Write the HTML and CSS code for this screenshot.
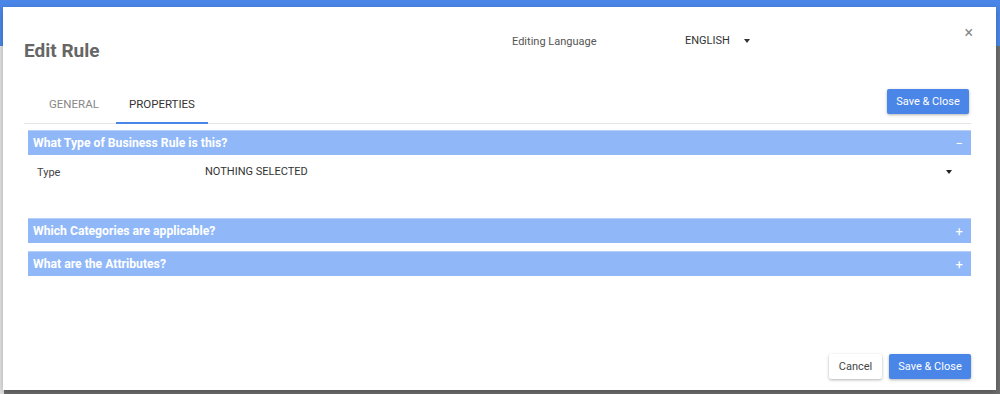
FILE: index.html
```html
<!DOCTYPE html>
<html>
<head>
    <title>Edit Rule</title>
    <link rel="stylesheet" href="styles.css">
</head>
<body>
    <div class="backdrop">
        <div class="app-bar"></div>
    </div>

    <div class="dialog">
        <div class="dialog-head">
            <h1>Edit Rule</h1>
            <div class="language">
                <span class="lang-label">Editing Language</span>
                <span class="lang-value">ENGLISH</span>
                <span class="caret"></span>
            </div>
            <span class="close">&times;</span>
        </div>

        <div class="tab-row">
            <div class="tabs">
                <div class="tab">GENERAL</div>
                <div class="tab active">PROPERTIES</div>
            </div>
            <button class="btn primary">Save &amp; Close</button>
        </div>

        <div class="section">
            <div class="section-head">
                <span>What Type of Business Rule is this?</span>
                <span class="toggle">&minus;</span>
            </div>
            <div class="field">
                <span class="field-label">Type</span>
                <span class="field-value">NOTHING SELECTED</span>
                <span class="caret dark"></span>
            </div>
        </div>

        <div class="section">
            <div class="section-head">
                <span>Which Categories are applicable?</span>
                <span class="toggle">+</span>
            </div>
        </div>

        <div class="section">
            <div class="section-head">
                <span>What are the Attributes?</span>
                <span class="toggle">+</span>
            </div>
        </div>

        <div class="dialog-foot">
            <button class="btn">Cancel</button>
            <button class="btn primary">Save &amp; Close</button>
        </div>
    </div>
</body>
</html>
```

FILE: styles.css
```css
body {
    margin: 0;
    font-family: Roboto, Arial, sans-serif;
    background: #6e6e6e;
    height: 394px;
    overflow: hidden;
}
.backdrop {
    position: absolute;
    inset: 0;
    background: linear-gradient(to right, #e2e2e2 0, #e2e2e2 4px, #6e6e6e 4px);
}
.app-bar {
    height: 46px;
    background: #4a86e8;
}
.dialog {
    position: absolute;
    left: 3px;
    top: 7px;
    width: 993px;
    height: 383px;
    background: #fff;
    box-shadow: 0 2px 6px rgba(0,0,0,0.25);
    box-sizing: border-box;
    padding: 0 25px 0 21px;
    display: flex;
    flex-direction: column;
}
.dialog-head {
    display: flex;
    align-items: flex-start;
    height: 75px;
    position: relative;
}
.dialog-head h1 {
    margin: 32px 0 0 0;
    font-size: 19px;
    font-weight: bold;
    color: #666;
    width: 488px;
}
.language {
    display: flex;
    align-items: center;
    margin-top: 26px;
    font-size: 11px;
}
.lang-label {
    color: #555;
    width: 173px;
    margin-top: 2px;
}
.lang-value {
    color: #333;
}
.caret {
    width: 0;
    height: 0;
    border-left: 3.5px solid transparent;
    border-right: 3.5px solid transparent;
    border-top: 4px solid #333;
    margin-left: 14px;
}
.close {
    position: absolute;
    right: -2px;
    top: 16px;
    font-size: 16px;
    color: #888;
}
.tab-row {
    display: flex;
    justify-content: space-between;
    align-items: flex-start;
    border-bottom: 1px solid #e6e6e6;
    height: 42px;
    box-sizing: border-box;
}
.tabs {
    display: flex;
    padding-top: 16px;
    padding-left: 3px;
}
.tab {
    font-size: 11.5px;
    color: #888;
    padding: 0 21px 0 22px;
    height: 24px;
    line-height: 13px;
}
.tab.active {
    color: #333;
    padding: 0 13px 0 13px;
    margin-left: -4px;
    border-bottom: 2px solid #4a86e8;
}
.btn {
    font-family: Roboto, Arial, sans-serif;
    font-size: 11px;
    border: none;
    border-radius: 2px;
    padding: 0;
    height: 25px;
    background: #fff;
    color: #444;
    white-space: nowrap;
    box-shadow: 0 1px 3px rgba(0,0,0,0.3);
}
.btn.primary {
    background: #4a86e8;
    color: #fff;
}
.tab-row .btn {
    margin-top: 7px;
    margin-right: 2px;
    width: 82px;
}
.section {
    margin: 6px 0 0 4px;
}
.section + .section {
    margin-top: 8px;
}
.section-head {
    display: flex;
    justify-content: space-between;
    align-items: center;
    height: 25px;
    background: #90b8f8;
    border-top: 1px solid #b6d0fa;
    box-sizing: border-box;
    padding: 0 8px 0 5px;
    color: #fff;
    font-size: 12.2px;
    font-weight: bold;
}
.toggle {
    font-weight: normal;
    font-size: 13px;
}
.field {
    display: flex;
    align-items: center;
    height: 33px;
    padding: 0 0 0 9px;
    margin-bottom: 22px;
    font-size: 11px;
    color: #444;
}
.field-label {
    width: 168px;
    margin-top: 1px;
}
.field-value {
    flex: 1;
    color: #333;
}
.caret.dark {
    margin: 0 19px 0 0;
    border-top-color: #222;
}
.dialog-foot {
    margin-top: auto;
    display: flex;
    justify-content: flex-end;
    gap: 7px;
    padding-bottom: 11px;
}
.dialog-foot .btn:first-child {
    width: 53px;
}
.dialog-foot .btn.primary {
    width: 82px;
}
```
